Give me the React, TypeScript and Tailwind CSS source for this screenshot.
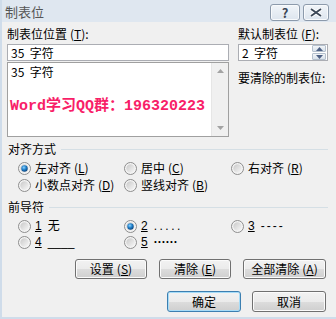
import React from "react"

function Acc({ k }: { k: string }) {
  return (
    <span className="ml-[3px]">
      (<span className="underline">{k}</span>)
    </span>
  )
}

function Radio({ checked }: { checked?: boolean }) {
  return (
    <svg width="13" height="13" viewBox="0 0 13 13" className="shrink-0">
      <defs>
        <linearGradient id="rg" x1="0" y1="0" x2="1" y2="1">
          <stop offset="0" stopColor="#c9c9c9" />
          <stop offset="1" stopColor="#f7f7f7" />
        </linearGradient>
        <radialGradient id="rd" cx="0.4" cy="0.35" r="0.7">
          <stop offset="0" stopColor="#8fd3ff" />
          <stop offset="0.5" stopColor="#1f7fc9" />
          <stop offset="1" stopColor="#0b3e74" />
        </radialGradient>
      </defs>
      <circle cx="6.5" cy="6.5" r="6" fill="#f4f4f4" stroke="#8d8d8d" strokeWidth="1" />
      <circle cx="6.5" cy="6.5" r="4.2" fill="url(#rg)" />
      {checked && <circle cx="6.5" cy="6.5" r="3.2" fill="url(#rd)" />}
    </svg>
  )
}

function Opt({ checked, children }: { checked?: boolean; children: React.ReactNode }) {
  return (
    <div className="flex items-center gap-[4px] h-[16px]">
      <Radio checked={checked} />
      <span className="whitespace-nowrap flex items-center">{children}</span>
    </div>
  )
}

function GroupLabel({ text }: { text: string }) {
  return (
    <div className="flex items-center gap-[5px] h-[14px] pr-[8px]">
      <span>{text}</span>
      <div className="flex-1 h-px bg-[#d5dfe5]" />
    </div>
  )
}

function Btn({ w, h, def, children }: { w: string; h: string; def?: boolean; children: React.ReactNode }) {
  return (
    <div
      className={
        "flex items-center justify-center rounded-[3px] border bg-[linear-gradient(#f2f2f2,#ebebeb_50%,#dddddd_50%,#cfcfcf)] " +
        w +
        " " +
        h +
        (def
          ? " border-[#3c7fb1] shadow-[inset_0_0_0_1px_#a6dcf8]"
          : " border-[#707070] shadow-[inset_0_0_0_1px_#fbfbfb]")
      }
    >
      {children}
    </div>
  )
}

function Arrow({ up, color = "#4d6185" }: { up?: boolean; color?: string }) {
  return (
    <svg width="7" height="4" viewBox="0 0 7 4">
      <path d={up ? "M0 4 L3.5 0 L7 4 Z" : "M0 0 L7 0 L3.5 4 Z"} fill={color} />
    </svg>
  )
}

function Num({ n }: { n: string }) {
  return <span className="underline mr-[6px]">{n}</span>
}

export default function App() {
  return (
    <div className="w-[336px] h-[319px] bg-[#f0f0f0] border-l-2 border-b-2 border-[#cfdcea] flex flex-col text-[12px] leading-[14px] text-black font-['Noto_Sans_CJK_SC',sans-serif] overflow-hidden">
      {/* title bar */}
      <div className="h-[22px] bg-[#dfe7f0] flex items-center justify-between pl-[3px] pr-[7px] shrink-0">
        <span className="text-[13px] text-[#555] pt-[1px]">制表位</span>
        <div className="flex gap-[3px] mt-[2px]">
          <div className="w-[30px] h-[17px] rounded-[3px] border border-[#8c9aab] bg-[linear-gradient(#f1f5f9,#dde5ee)] shadow-[inset_0_0_0_1px_#f8fafc] flex items-center justify-center">
            <span className="text-[13px] font-bold text-[#3b4756] leading-none [text-shadow:0_0_1px_#fff]">?</span>
          </div>
          <div className="w-[26px] h-[17px] rounded-[3px] border border-[#8c9aab] bg-[linear-gradient(#f1f5f9,#dde5ee)] shadow-[inset_0_0_0_1px_#f8fafc] flex items-center justify-center">
            <svg width="12" height="9" viewBox="0 0 12 9">
              <path d="M1 1 L11 8 M11 1 L1 8" stroke="#fff" strokeWidth="3.6" />
              <path d="M1 1 L11 8 M11 1 L1 8" stroke="#3b4756" strokeWidth="1.8" />
            </svg>
          </div>
        </div>
      </div>

      {/* body */}
      <div className="flex flex-col pl-[5px]">
        <div className="flex mt-[5px]">
          <div className="w-[222px] flex flex-col">
            <div>
              制表位位置<Acc k="T" />:
            </div>
            <div className="mt-[3px] h-[17px] bg-white border border-[#abadb3] pl-[3px] flex items-center">
              35&nbsp;&nbsp;字符
            </div>
            <div className="mt-[1px] h-[75px] bg-white border border-[#a0a0a0] flex">
              <div className="flex-1 pl-[3px] pt-[2px] flex flex-col">
                <div>35&nbsp;&nbsp;字符</div>
                <div className="mt-[19px] text-[15px] leading-[18px] font-bold text-[#f81e68] whitespace-nowrap font-['Liberation_Mono','Noto_Sans_CJK_SC',monospace] -ml-[1px]">
                  Word学习QQ群：196320223
                </div>
              </div>
              <div className="w-[17px] bg-[#f0f0f0] border-l border-[#e6e6e6] flex flex-col items-center justify-between py-[6px]">
                <Arrow up color="#a3a3a3" />
                <Arrow color="#a3a3a3" />
              </div>
            </div>
          </div>

          <div className="ml-[9px] w-[90px] flex flex-col">
            <div className="whitespace-nowrap">
              默认制表位<Acc k="F" />:
            </div>
            <div className="mt-[3px] h-[17px] bg-white border border-[#abadb3] flex items-center">
              <span className="flex-1 pl-[3px]">2&nbsp;&nbsp;字符</span>
              <div className="w-[14px] h-[15px] mr-[1px] flex flex-col gap-px">
                <div className="flex-1 flex items-center justify-center bg-[linear-gradient(#f2f5f8,#d9e2eb)] border border-[#b4c0cd] rounded-[1px]">
                  <Arrow up />
                </div>
                <div className="flex-1 flex items-center justify-center bg-[linear-gradient(#f2f5f8,#d9e2eb)] border border-[#b4c0cd] rounded-[1px]">
                  <Arrow />
                </div>
              </div>
            </div>
            <div className="mt-[10px] whitespace-nowrap">要清除的制表位:</div>
          </div>
        </div>

        {/* alignment */}
        <div className="mt-[5px] pl-px">
          <GroupLabel text="对齐方式" />
        </div>
        <div className="mt-[4px] pl-[11px] grid grid-cols-[106px_107px_auto] gap-y-[1px]">
          <Opt checked>
            左对齐<Acc k="L" />
          </Opt>
          <Opt>
            居中<Acc k="C" />
          </Opt>
          <Opt>
            右对齐<Acc k="R" />
          </Opt>
          <Opt>
            小数点对齐<Acc k="D" />
          </Opt>
          <Opt>
            竖线对齐<Acc k="B" />
          </Opt>
        </div>

        {/* leader */}
        <div className="mt-[7px] pl-px">
          <GroupLabel text="前导符" />
        </div>
        <div className="mt-[4px] pl-[11px] grid grid-cols-[106px_107px_auto] font-['Liberation_Sans','Noto_Sans_CJK_SC',sans-serif]">
          <Opt>
            <Num n="1" />无
          </Opt>
          <Opt checked>
            <Num n="2" />
            <span className="tracking-[2.5px]">.....</span>
          </Opt>
          <Opt>
            <Num n="3" />
            <span className="tracking-[2px]">----</span>
          </Opt>
          <Opt>
            <Num n="4" />
            <span>____</span>
          </Opt>
          <Opt>
            <Num n="5" />
            <span className="font-bold">······</span>
          </Opt>
        </div>

        {/* action buttons */}
        <div className="mt-[9px] flex justify-end gap-[12px] pr-[10px]">
          <Btn w="w-[72px]" h="h-[20px]">
            设置<Acc k="S" />
          </Btn>
          <Btn w="w-[72px]" h="h-[20px]">
            清除<Acc k="E" />
          </Btn>
          <Btn w="w-[83px]" h="h-[20px]">
            全部清除<Acc k="A" />
          </Btn>
        </div>
        <div className="mt-[12px] flex justify-end gap-[11px] pr-[10px]">
          <Btn w="w-[74px]" h="h-[21px]" def>
            确定
          </Btn>
          <Btn w="w-[74px]" h="h-[21px]">
            取消
          </Btn>
        </div>
      </div>
    </div>
  )
}
